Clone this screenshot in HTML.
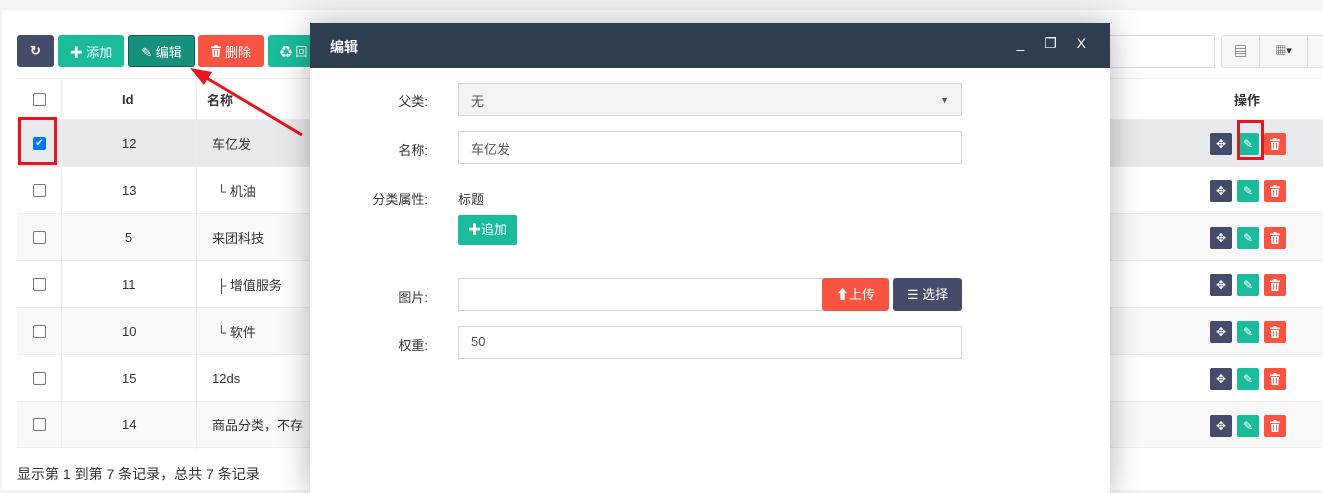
<!DOCTYPE html>
<html><head><meta charset="utf-8"><style>
*{box-sizing:border-box;margin:0;padding:0}
body{width:1323px;height:480px;overflow:hidden;background:#f1f4f6;font-family:"Liberation Sans","Noto Sans CJK SC",sans-serif;font-size:13px;color:#333;position:relative}
.panel{position:absolute;left:2px;top:10px;width:1330px;height:480px;background:#fff}
.btn{position:absolute;top:35px;height:32px;color:#fff;border-radius:3px;font-size:13px;display:flex;align-items:center;justify-content:center;gap:4px}
.row{position:absolute;left:17px;width:1320px;height:47px;border-top:1px solid #eee}
.cell{position:absolute;top:0;height:100%;display:flex;align-items:center}
.cb{width:13px;height:13px;border:1px solid #767676;border-radius:2px;background:#fff}
.ops{position:absolute;left:1193px;top:13px;display:flex;gap:5px}
.ops span{width:22px;height:22px;border-radius:2px;display:flex;align-items:center;justify-content:center;color:#fff;font-size:12px}
.modal{position:absolute;left:310px;top:23px;width:800px;height:470px;background:#fff;box-shadow:0 0 30px rgba(0,0,0,.3)}
.mh{height:45px;background:#2e3e50;color:#fff;font-size:14px;padding:14px 20px;font-weight:bold}
.lab{position:absolute;width:118px;text-align:right;left:0;font-size:13px;color:#333}
.inp{position:absolute;left:148px;width:504px;height:33px;border:1px solid #d2d6de;padding:8px 12px;font-size:13px;color:#555}
</style></head><body>
<svg width="0" height="0" style="position:absolute"><defs><symbol id="tr" viewBox="0 0 10 12"><rect x="0" y="1.5" width="10" height="1.6" fill="#fff"/><rect x="3.5" y="0" width="3" height="2" fill="#fff"/><path d="M1 4h8l-.7 8H1.7z" fill="#fff"/><path d="M3.6 5v5.5M6.4 5v5.5" stroke="currentColor" stroke-width=".9"/></symbol></defs></svg>
<div class="panel"></div>
<div class="btn" style="left:17px;width:37px;background:#444c69;font-weight:bold">&#x21bb;</div>
<div class="btn" style="left:58px;width:66px;background:#1abc9c">✚ 添加</div>
<div class="btn" style="left:128px;width:67px;background:#16907a;border:1px solid #0e5e4e">✎ 编辑</div>
<div class="btn" style="left:198px;width:66px;background:#f75444;color:#fff"><svg width="10" height="12" style="color:#f75444"><use href="#tr"/></svg>删除</div>
<div class="btn" style="left:268px;width:50px;background:#1abc9c;justify-content:flex-start;padding-left:12px;font-size:12px">♻ 回</div>
<div style="position:absolute;left:1100px;top:35px;width:115px;height:33px;border:1px solid #ddd"></div>
<div style="position:absolute;left:1221px;top:35px;width:110px;height:33px;border:1px solid #ddd;border-radius:3px;background:#f7f7f7;display:flex"><div style="width:38px;border-right:1px solid #ddd;text-align:center;line-height:31px">▤</div><div style="width:48px;border-right:1px solid #ddd;text-align:center;line-height:31px;font-size:11px">▦▾</div></div>
<div class="row" style="top:78px;height:41px;font-weight:bold;border-top:1px solid #eee">
<div class="cell" style="left:16px"><div class="cb"></div></div>
<div class="cell" style="left:105px">Id</div><div class="cell" style="left:190px">名称</div>
<div class="cell" style="left:1217px">操作</div>
<div style="position:absolute;left:44px;top:0;height:370px;border-left:1px solid #eee;z-index:2"></div>
<div style="position:absolute;left:179px;top:0;height:370px;border-left:1px solid #eee;z-index:2"></div>
</div>
<div class="row" style="top:119px;background:#e8eaed"><div class="cell" style="left:16px"><div class="cb" style="background:#0075ff;border-color:#0075ff;color:#fff;font-size:10px;line-height:11px;text-align:center">✔</div></div><div class="cell" style="left:105px">12</div><div class="cell" style="left:195px">车亿发</div><div class="ops"><span style="background:#444c69">✥</span><span style="background:#1abc9c">✎</span><span style="background:#f75444;color:#f75444"><svg width="10" height="12"><use href="#tr"/></svg></span></div></div>
<div class="row" style="top:166px"><div class="cell" style="left:16px"><div class="cb"></div></div><div class="cell" style="left:105px">13</div><div class="cell" style="left:200px">└ 机油</div><div class="ops"><span style="background:#444c69">✥</span><span style="background:#1abc9c">✎</span><span style="background:#f75444;color:#f75444"><svg width="10" height="12"><use href="#tr"/></svg></span></div></div>
<div class="row" style="top:213px;background:#f9f9f9"><div class="cell" style="left:16px"><div class="cb"></div></div><div class="cell" style="left:108px">5</div><div class="cell" style="left:195px">来团科技</div><div class="ops"><span style="background:#444c69">✥</span><span style="background:#1abc9c">✎</span><span style="background:#f75444;color:#f75444"><svg width="10" height="12"><use href="#tr"/></svg></span></div></div>
<div class="row" style="top:260px"><div class="cell" style="left:16px"><div class="cb"></div></div><div class="cell" style="left:105px">11</div><div class="cell" style="left:200px">├ 增值服务</div><div class="ops"><span style="background:#444c69">✥</span><span style="background:#1abc9c">✎</span><span style="background:#f75444;color:#f75444"><svg width="10" height="12"><use href="#tr"/></svg></span></div></div>
<div class="row" style="top:307px;background:#f9f9f9"><div class="cell" style="left:16px"><div class="cb"></div></div><div class="cell" style="left:105px">10</div><div class="cell" style="left:200px">└ 软件</div><div class="ops"><span style="background:#444c69">✥</span><span style="background:#1abc9c">✎</span><span style="background:#f75444;color:#f75444"><svg width="10" height="12"><use href="#tr"/></svg></span></div></div>
<div class="row" style="top:354px"><div class="cell" style="left:16px"><div class="cb"></div></div><div class="cell" style="left:105px">15</div><div class="cell" style="left:195px">12ds</div><div class="ops"><span style="background:#444c69">✥</span><span style="background:#1abc9c">✎</span><span style="background:#f75444;color:#f75444"><svg width="10" height="12"><use href="#tr"/></svg></span></div></div>
<div class="row" style="top:401px;background:#f9f9f9;border-bottom:1px solid #eee"><div class="cell" style="left:16px"><div class="cb"></div></div><div class="cell" style="left:105px">14</div><div class="cell" style="left:195px">商品分类，不存</div><div class="ops"><span style="background:#444c69">✥</span><span style="background:#1abc9c">✎</span><span style="background:#f75444;color:#f75444"><svg width="10" height="12"><use href="#tr"/></svg></span></div></div>
<div style="position:absolute;left:17px;top:464px;font-size:14px">显示第 1 到第 7 条记录，总共 7 条记录</div>
<div style="position:absolute;left:18px;top:117px;width:39px;height:48px;border:3px solid #e8141e"></div>
<div style="position:absolute;left:1237px;top:120px;width:27px;height:40px;border:3px solid #e8141e"></div>
<svg style="position:absolute;left:0;top:0" width="320" height="150"><line x1="302" y1="135" x2="200" y2="74" stroke="#e8141e" stroke-width="3"/><polygon points="190,68 212,72 204,85" fill="#e8141e"/></svg>
<div class="modal">
<div class="mh">编辑<span style="position:absolute;right:16px;top:12px;font-size:14px;letter-spacing:8px;font-weight:normal">_ ❐ X</span></div>
<div class="lab" style="top:68px">父类:</div>
<div class="inp" style="top:60px;background:#f3f3f3;padding-top:7px">无<span style="position:absolute;right:12px;font-size:9px;top:11px">▼</span></div>
<div class="lab" style="top:117px">名称:</div>
<div class="inp" style="top:108px;padding-top:7px">车亿发</div>
<div class="lab" style="top:166px">分类属性:</div>
<div style="position:absolute;left:148px;top:166px">标题</div>
<div style="position:absolute;left:148px;top:192px;width:59px;height:30px;background:#1abc9c;color:#fff;border-radius:2px;text-align:center;line-height:30px">✚追加</div>
<div class="lab" style="top:264px">图片:</div>
<div class="inp" style="top:255px;width:365px"></div>
<div style="position:absolute;left:512px;top:255px;width:67px;height:33px;background:#f75444;color:#fff;border-radius:3px;text-align:center;line-height:33px">⬆上传</div>
<div style="position:absolute;left:583px;top:255px;width:69px;height:33px;background:#444c69;color:#fff;border-radius:3px;text-align:center;line-height:33px">☰ 选择</div>
<div class="lab" style="top:312px">权重:</div>
<div class="inp" style="top:303px;padding-top:7px">50</div>
</div>
</body></html>
